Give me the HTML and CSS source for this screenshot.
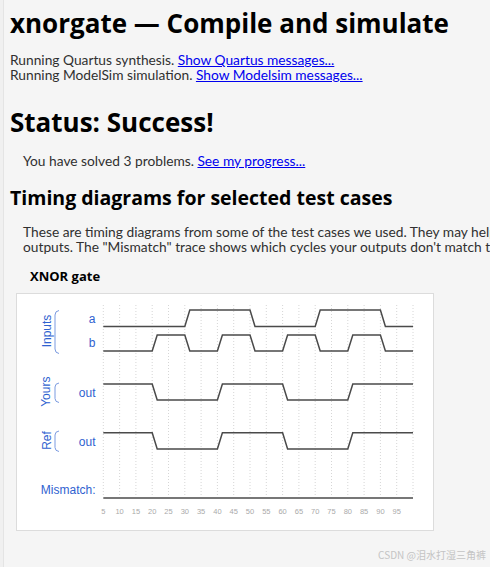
FILE: index.html
```html
<!DOCTYPE html>
<html lang="en">
<head>
<meta charset="utf-8">
<title>xnorgate — Compile and simulate</title>
<link rel="stylesheet" href="styles.css">
</head>
<body>
<div class="page">
  <h1 class="title">xnorgate — Compile and simulate</h1>
  <p class="log">Running Quartus synthesis. <a href="#">Show Quartus messages...</a><br>Running ModelSim simulation. <a href="#">Show Modelsim messages...</a></p>
  <h2 class="status">Status: Success!</h2>
  <p class="indent solved">You have solved 3 problems. <a href="#">See my progress...</a></p>
  <h3 class="section">Timing diagrams for selected test cases</h3>
  <p class="indent explain">These are timing diagrams from some of the test cases we used. They may help you understand your circuit's<br>outputs. The "Mismatch" trace shows which cycles your outputs don't match the reference solution.</p>
  <div class="case-title">XNOR gate</div>
  <div class="chart">
    <svg class="wave" width="416" height="236" viewBox="17 294 416 236" xmlns="http://www.w3.org/2000/svg">
      <g class="grid">
        <line x1="103.3" y1="305" x2="103.3" y2="497"/>
        <line x1="119.6" y1="305" x2="119.6" y2="497"/>
        <line x1="135.9" y1="305" x2="135.9" y2="497"/>
        <line x1="152.2" y1="305" x2="152.2" y2="497"/>
        <line x1="168.5" y1="305" x2="168.5" y2="497"/>
        <line x1="184.8" y1="305" x2="184.8" y2="497"/>
        <line x1="201.1" y1="305" x2="201.1" y2="497"/>
        <line x1="217.4" y1="305" x2="217.4" y2="497"/>
        <line x1="233.7" y1="305" x2="233.7" y2="497"/>
        <line x1="250.0" y1="305" x2="250.0" y2="497"/>
        <line x1="266.3" y1="305" x2="266.3" y2="497"/>
        <line x1="282.6" y1="305" x2="282.6" y2="497"/>
        <line x1="298.9" y1="305" x2="298.9" y2="497"/>
        <line x1="315.2" y1="305" x2="315.2" y2="497"/>
        <line x1="331.5" y1="305" x2="331.5" y2="497"/>
        <line x1="347.8" y1="305" x2="347.8" y2="497"/>
        <line x1="364.1" y1="305" x2="364.1" y2="497"/>
        <line x1="380.4" y1="305" x2="380.4" y2="497"/>
        <line x1="396.7" y1="305" x2="396.7" y2="497"/>
        <line x1="413.0" y1="305" x2="413.0" y2="497"/>
      </g>
      <g class="groups">
        <text x="50.5" y="331" transform="rotate(-90 50.5 331)">Inputs</text>
        <text x="50.5" y="391.7" transform="rotate(-90 50.5 391.7)">Yours</text>
        <text x="50.5" y="440.5" transform="rotate(-90 50.5 440.5)">Ref</text>
      </g>
      <g class="brackets">
        <path d="M59 310.5 Q55 311 55 315 V349 Q55 353 59 353.5"/>
        <path d="M59 383 Q55 383.5 55 387 V398.5 Q55 402 59 402.5"/>
        <path d="M59 431 Q55 431.5 55 435 V447.5 Q55 451 59 451.5"/>
      </g>
      <g class="labels">
        <text x="95.5" y="323.3">a</text>
        <text x="95.5" y="347">b</text>
        <text x="95.5" y="396.7">out</text>
        <text x="95.5" y="445.7">out</text>
        <text x="95.5" y="494">Mismatch:</text>
      </g>
      <g class="traces">
        <path d="M103.3 326.5 H184.8 L189.8 310 H250 L255 326.5 H315.2 L320.2 310 H380.4 L385.4 326.5 H413"/>
        <path d="M103.3 351 H152.2 L157.2 335 H184.8 L189.8 351 H217.4 L222.4 335 H250 L255 351 H282.6 L287.6 335 H315.2 L320.2 351 H347.8 L352.8 335 H380.4 L385.4 351 H413"/>
        <path d="M103.3 384 H152.2 L157.2 400 H217.4 L222.4 384 H282.6 L287.6 400 H347.8 L352.8 384 H413"/>
        <path d="M103.3 432.7 H152.2 L157.2 449 H217.4 L222.4 432.7 H282.6 L287.6 449 H347.8 L352.8 432.7 H413"/>
        <path d="M103.3 498 H413"/>
      </g>
      <g class="ticks">
        <text x="103.3" y="514">5</text>
        <text x="119.6" y="514">10</text>
        <text x="135.9" y="514">15</text>
        <text x="152.2" y="514">20</text>
        <text x="168.5" y="514">25</text>
        <text x="184.8" y="514">30</text>
        <text x="201.1" y="514">35</text>
        <text x="217.4" y="514">40</text>
        <text x="233.7" y="514">45</text>
        <text x="250.0" y="514">50</text>
        <text x="266.3" y="514">55</text>
        <text x="282.6" y="514">60</text>
        <text x="298.9" y="514">65</text>
        <text x="315.2" y="514">70</text>
        <text x="331.5" y="514">75</text>
        <text x="347.8" y="514">80</text>
        <text x="364.1" y="514">85</text>
        <text x="380.4" y="514">90</text>
        <text x="396.7" y="514">95</text>
      </g>
    </svg>
  </div>
</div>
<div class="watermark">CSDN @泪水打湿三角裤</div>
</body>
</html>
```

FILE: styles.css
```css
html, body {
  margin: 0;
  padding: 0;
  overflow: hidden;
  background: #f0f0f0;
}

.page {
  margin-left: 3px;
  border-left: 1px solid #e4e4e4;
  background: #f5f5f5;
  width: 720px;
  height: 567px;
  box-sizing: border-box;
  padding: 6px 0 0 6px;
  color: #303030;
  font-family: Lato, "Open Sans", sans-serif;
  font-size: 13.75px;
}

.title, .status, .section, .case-title {
  font-family: "Open Sans", sans-serif;
  font-weight: 700;
  color: #000;
  margin: 0;
}

.title {
  font-size: 26px;
  line-height: 34px;
}

.log {
  margin: 12.1px 0 0;
  line-height: 15px;
  white-space: nowrap;
}

.status {
  font-size: 26px;
  line-height: 34px;
  margin-top: 23.4px;
}

.indent {
  margin: 0 0 0 13px;
  line-height: 15px;
  white-space: nowrap;
}

.solved {
  margin-top: 13.6px;
}

.section {
  font-size: 19.5px;
  line-height: 24px;
  margin-top: 18.1px;
}

.explain {
  margin-top: 13.5px;
}

a {
  color: #0000ee;
}

.case-title {
  font-size: 13px;
  line-height: 16px;
  margin: 14px 0 0 20px;
}

.chart {
  margin: 9px 0 0 6px;
  width: 416px;
  height: 236px;
  border: 1px solid #dcdcdc;
  background: #fff;
}

.wave {
  display: block;
}

.grid line {
  stroke: #d6d6d6;
  stroke-width: 1;
  stroke-dasharray: 1 2;
}

.groups text, .labels text {
  font-family: "Liberation Sans", Arial, sans-serif;
  font-size: 12px;
  fill: #2f62d0;
}

.groups text {
  text-anchor: middle;
}

.labels text {
  text-anchor: end;
}

.brackets path {
  fill: none;
  stroke: #7b9be0;
  stroke-width: 1;
}

.traces path {
  fill: none;
  stroke: #4a4a4a;
  stroke-width: 1.5;
}

.ticks text {
  font-family: "Liberation Sans", Arial, sans-serif;
  font-size: 7.5px;
  fill: #aaaaaa;
  text-anchor: middle;
}

.watermark {
  position: absolute;
  right: 4px;
  bottom: 5px;
  font-family: "Noto Sans CJK SC", "Liberation Sans", sans-serif;
  font-size: 10px;
  color: #c4c4c4;
}
```
